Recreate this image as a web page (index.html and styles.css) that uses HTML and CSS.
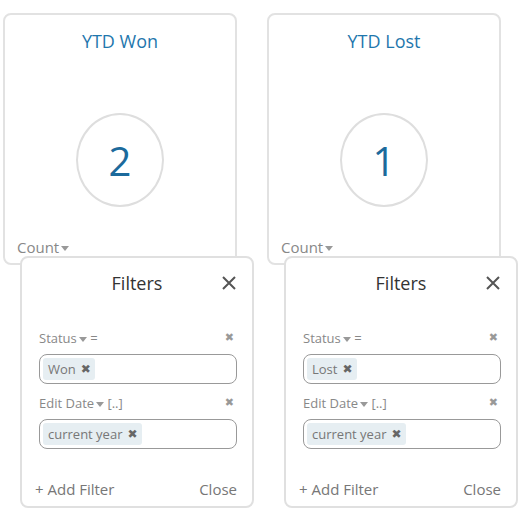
FILE: index.html
```html
<!DOCTYPE html>
<html lang="en">
<head>
    <meta charset="UTF-8">
    <meta name="viewport" content="width=device-width, initial-scale=1.0">
    <title>YTD Widgets</title>
    <link rel="stylesheet" href="styles.css">
</head>
<body>
    <div class="board">
        <div class="column">
            <div class="card">
                <div class="card-title">YTD Won</div>
                <div class="metric">2</div>
                <div class="card-footer">Count<span class="caret"></span></div>
            </div>
            <div class="popup">
                <div class="popup-head">
                    <span></span>
                    <span class="popup-title">Filters</span>
                    <svg class="close-icon" width="14" height="14" viewBox="0 0 14 14"><path d="M1 1L13 13M13 1L1 13" stroke="#555" stroke-width="2" fill="none"/></svg>
                </div>
                <div class="popup-body">
                    <div class="filter-label"><span>Status<span class="caret"></span> =</span><span class="remove">&#10006;</span></div>
                    <div class="filter-box"><span class="tag">Won <b>&#10006;</b></span></div>
                    <div class="filter-label second"><span>Edit Date<span class="caret"></span> [..]</span><span class="remove">&#10006;</span></div>
                    <div class="filter-box"><span class="tag">current year <b>&#10006;</b></span></div>
                </div>
                <div class="popup-foot">
                    <span>+ Add Filter</span>
                    <span>Close</span>
                </div>
            </div>
        </div>

        <div class="column">
            <div class="card">
                <div class="card-title">YTD Lost</div>
                <div class="metric">1</div>
                <div class="card-footer">Count<span class="caret"></span></div>
            </div>
            <div class="popup">
                <div class="popup-head">
                    <span></span>
                    <span class="popup-title">Filters</span>
                    <svg class="close-icon" width="14" height="14" viewBox="0 0 14 14"><path d="M1 1L13 13M13 1L1 13" stroke="#555" stroke-width="2" fill="none"/></svg>
                </div>
                <div class="popup-body">
                    <div class="filter-label"><span>Status<span class="caret"></span> =</span><span class="remove">&#10006;</span></div>
                    <div class="filter-box"><span class="tag">Lost <b>&#10006;</b></span></div>
                    <div class="filter-label second"><span>Edit Date<span class="caret"></span> [..]</span><span class="remove">&#10006;</span></div>
                    <div class="filter-box"><span class="tag">current year <b>&#10006;</b></span></div>
                </div>
                <div class="popup-foot">
                    <span>+ Add Filter</span>
                    <span>Close</span>
                </div>
            </div>
        </div>
    </div>
</body>
</html>
```

FILE: styles.css
```css
body {
    margin: 0;
    font-family: 'Open Sans', 'DejaVu Sans', sans-serif;
    background-color: #fff;
    color: #333;
}
.board {
    display: flex;
    gap: 30px;
    padding: 13px 0 0 3px;
}
.column {
    width: 234px;
    flex: 0 0 234px;
}
.card {
    box-sizing: border-box;
    height: 252px;
    border: 2px solid #e2e2e2;
    border-radius: 8px;
    display: flex;
    flex-direction: column;
    align-items: center;
}
.card-title {
    margin-top: 14px;
    font-size: 18px;
    line-height: 24px;
    color: #1f77ad;
}
.metric {
    box-sizing: border-box;
    width: 88px;
    height: 94px;
    margin-top: 60px;
    border: 2px solid #dedede;
    border-radius: 50%;
    display: flex;
    align-items: center;
    justify-content: center;
    font-size: 40px;
    color: #1c6a9c;
}
.card-footer {
    margin-top: auto;
    align-self: stretch;
    padding: 0 0 6px 12px;
    font-size: 15px;
    line-height: 20px;
    color: #888;
}
.caret {
    display: inline-block;
    width: 0;
    height: 0;
    margin-left: 2px;
    vertical-align: middle;
    border-left: 4px solid transparent;
    border-right: 4px solid transparent;
    border-top: 5px solid #999;
}
.popup {
    position: relative;
    box-sizing: border-box;
    width: 234px;
    height: 252px;
    margin: -9px 0 0 17px;
    background-color: #fff;
    border: 2px solid #e0e0e0;
    border-radius: 8px;
}
.popup-head {
    display: grid;
    grid-template-columns: 1fr auto 1fr;
    align-items: center;
    margin-top: 11px;
    height: 28px;
}
.popup-title {
    font-size: 18px;
    line-height: 28px;
    color: #333;
}
.close-icon {
    justify-self: end;
    margin-right: 16px;
}
.popup-body {
    padding: 0 15px 0 17px;
    margin-top: 31px;
}
.filter-label {
    display: flex;
    justify-content: space-between;
    align-items: center;
    padding-right: 3px;
    font-size: 13px;
    line-height: 20px;
    color: #888;
}
.filter-label.second {
    margin-top: 9px;
}
.remove {
    font-family: 'DejaVu Sans', sans-serif;
    font-size: 11px;
    color: #999;
}
.filter-box {
    box-sizing: border-box;
    height: 30px;
    margin-top: 6px;
    padding: 3px;
    border: 1px solid #999;
    border-radius: 8px;
    display: flex;
}
.tag {
    display: inline-flex;
    align-items: center;
    padding: 0 4px 0 5px;
    background-color: #e6eef2;
    border-radius: 3px;
    font-size: 13px;
    color: #777;
}
.tag b {
    margin-left: 5px;
    font-family: 'DejaVu Sans', sans-serif;
    font-size: 12px;
    color: #666;
}
.popup-foot {
    display: flex;
    justify-content: space-between;
    margin-top: 29px;
    padding: 0 15px 0 13px;
    font-size: 15px;
    line-height: 22px;
    color: #777;
}
```
